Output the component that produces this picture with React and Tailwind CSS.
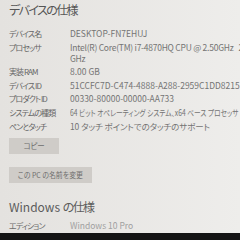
export default function App() {
  const rows = [
    { label: "デバイス名", value: ["DESKTOP-FN7EHUJ"] },
    { label: "プロセッサ", value: ["Intel(R) Core(TM) i7-4870HQ CPU @ 2.50GHz\u00a0\u00a0\u00a02.50", "GHz"], cls: "tracking-[-0.25px]" },
    { label: "実装 RAM", value: ["8.00 GB"] },
    { label: "デバイス ID", value: ["51CCFC7D-C474-4888-A288-2959C1DD8215"] },
    { label: "プロダクト ID", value: ["00330-80000-00000-AA733"] },
    { label: "システムの種類", value: ["64 ビット オペレーティング システム、x64 ベース プロセッサ"], cls: "inline-block origin-left scale-x-[0.79]" },
    { label: "ペンとタッチ", value: ["10 タッチ ポイントでのタッチのサポート"], cls: "tracking-[-0.1px]" },
  ];

  return (
    <div className="w-[240px] h-[240px] overflow-hidden flex flex-col bg-linear-to-r from-[#e4e2df] to-[#eeedeb] font-['Noto_Sans_CJK_JP',sans-serif] [font-feature-settings:'palt'] text-[#555]">
      <div className="flex-1 flex flex-col pl-[9px]">
        <div className="mt-[1px] text-[12px] leading-[17px] text-[#555] tracking-[-1.6px]">デバイスの仕様</div>
        <div className="mt-[10px] flex flex-col gap-y-[2.6px]">
          {rows.map((r) => (
            <div key={r.label} className="flex text-[8.5px] leading-[11px]">
              <div className="w-[61px] shrink-0 text-[8px] tracking-[-0.95px] text-[#666]">{r.label}</div>
              <div className="whitespace-nowrap text-[#747474]">
                {r.value.map((v) => (
                  <div key={v} className={r.cls || ""}>{v}</div>
                ))}
              </div>
            </div>
          ))}
        </div>
        <div className="mt-[6px] w-[50px] h-[16px] bg-[#cfccc8] flex items-center justify-center text-[7.5px] tracking-[-0.3px] text-[#6e6e6e]">
          コピー
        </div>
        <div className="mt-[13px] w-[83px] h-[16px] bg-[#cfccc8] flex items-center justify-center text-[7.5px] text-[#6e6e6e]">
          <span className="inline-block scale-x-[0.92]">この PC の名前を変更</span>
        </div>
        <div className="mt-[15px] text-[12px] leading-[17px] text-[#5c5c5c]">
          Windows <span className="tracking-[-1.6px]">の仕様</span>
        </div>
        <div className="mt-[5px] flex text-[8.5px] leading-[11px]">
          <div className="w-[61px] shrink-0 text-[8px] tracking-[-0.95px] text-[#6e6e6e]">エディション</div>
          <div className="text-[#a0a0a0]">Windows 10 Pro</div>
        </div>
      </div>
      <div className="h-[7px] bg-[#141414]" />
    </div>
  );
}
